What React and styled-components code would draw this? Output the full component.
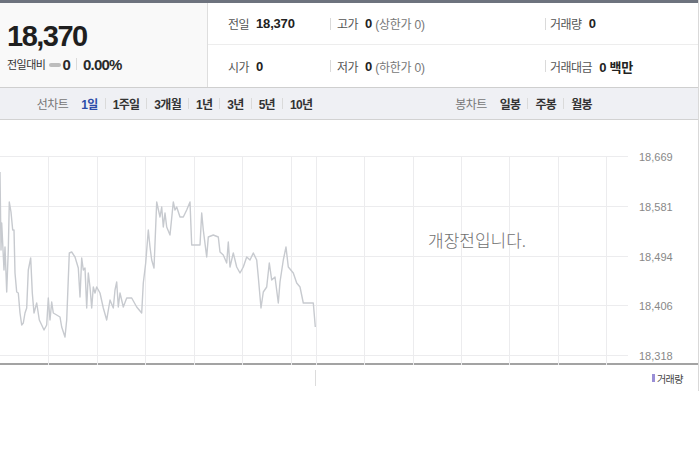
import React from "react";
import styled, { createGlobalStyle } from "styled-components";

const Global = createGlobalStyle`
  html, body { margin: 0; padding: 0; background: #fff; }
  body { font-family: "Liberation Sans", "Noto Sans CJK KR", sans-serif; color: #222; }
  * { box-sizing: border-box; }
`;

const Widget = styled.div`
  width: 699px;
  border-right: 1px solid #d9d9d9;
`;

const TopBar = styled.div`
  height: 3px;
  background: #6d737e;
`;

const Header = styled.div`
  display: grid;
  grid-template-columns: 208px 1fr;
  height: 85px;
  border-bottom: 1px solid #cfcfcf;
`;

const PricePanel = styled.div`
  background: #f9f9f9;
  border-right: 1px solid #dedede;
  padding: 17px 0 0 7px;
`;

const BigPrice = styled.div`
  font-size: 29px;
  font-weight: bold;
  letter-spacing: -1.5px;
  line-height: 32px;
  color: #1f1f1f;
`;

const ChangeRow = styled.div`
  display: flex;
  align-items: center;
  margin-top: 3px;
  height: 18px;
`;

const SmallLabel = styled.span`
  font-size: 11px;
  color: #333;
  letter-spacing: -0.5px;
`;

const FlatMark = styled.span`
  display: inline-block;
  width: 12px;
  height: 4px;
  border-radius: 2px;
  background: #bdbdbd;
  margin: 1px 1px 0 4px;
`;

const ChangeValue = styled.span`
  font-size: 15px;
  font-weight: bold;
  color: #2a2a2a;
  letter-spacing: -0.8px;
`;

const Sep = styled.span`
  display: inline-block;
  flex: none;
  width: 1px;
  height: ${(p) => p.$h ?? 12}px;
  background: #dadada;
  margin: 0 ${(p) => p.$m ?? 6}px;
`;

const InfoGrid = styled.div`
  display: grid;
  grid-template-columns: 122px 215px 1fr;
  grid-template-rows: 42px 1fr;
`;

const InfoCell = styled.div`
  display: flex;
  align-items: center;
  padding-left: ${(p) => (p.$first ? 20 : 0)}px;
  border-bottom: ${(p) => (p.$top ? "1px solid #ededed" : "none")};
`;

const InfoLabel = styled.span`
  font-size: 12px;
  color: #555;
  letter-spacing: -0.5px;
  margin-right: 7px;
  margin-left: ${(p) => p.$ml ?? 0}px;
`;

const InfoValue = styled.span`
  font-size: 13px;
  font-weight: bold;
  color: #222;
  letter-spacing: -0.2px;
`;

const InfoNote = styled.span`
  font-size: 12px;
  color: #777;
  margin-left: 3px;
  letter-spacing: -0.2px;
`;

const Toolbar = styled.div`
  display: flex;
  height: 32px;
  background: #eff0f4;
  border-bottom: 1px solid #d2d2d2;
`;

const ToolGroup = styled.div`
  flex: 1;
  display: flex;
  justify-content: center;
  align-items: center;
`;

const ToolLabel = styled.span`
  font-size: 12px;
  color: #777;
  letter-spacing: -0.5px;
  margin-right: 13px;
`;

const ToolItem = styled.span`
  font-size: 12px;
  font-weight: bold;
  letter-spacing: -0.7px;
  color: ${(p) => (p.$active ? "#2c4ca8" : "#333")};
`;

const ChartBox = styled.div`
  height: 245px;
  border-bottom: 2px solid #a3a3a3;
`;

const VolumeBar = styled.div`
  display: flex;
  align-items: center;
  height: 26px;
`;

const VolSep = styled.div`
  width: 1px;
  height: 16px;
  margin-left: 315px;
  background: #dcdcdc;
`;

const VolLegend = styled.div`
  margin-left: auto;
  margin-right: 15px;
  display: flex;
  align-items: center;
  font-size: 10px;
  color: #444;
  letter-spacing: -0.5px;
`;

const LegendMark = styled.span`
  display: inline-block;
  width: 3px;
  height: 8px;
  background: #9a8fd6;
  margin-right: 2px;
`;

const pts = [
  [0,52],[1,130],[1.7,103],[4,150],[5,127],[6.7,172],[8.3,130],[9.3,82],[11,92],[12.7,110],[14,110],[15,153],[16.7,172],[18.3,173],[20,193],[21.7,205],[23.3,203],[25,193],[26.7,188],[28.3,150],[30.7,138],[32.3,173],[34,193],[36.7,183],[39.3,200],[41.7,205],[44,210],[46.7,205],[48.3,178],[50,200],[51.7,182],[53.3,193],[56.7,195],[60,197],[61.7,207],[65,217],[66.7,200],[69.3,133],[71.7,132],[75,137],[78.3,148],[80,177],[81.7,138],[83.3,150],[85,148],[86.7,188],[88.3,153],[90,167],[91.7,188],[93.3,167],[95,173],[96.7,167],[100,173],[103.3,188],[106.7,200],[110,180],[113.3,188],[115,170],[116.7,162],[118.3,187],[120,173],[123.3,187],[126.7,178],[131.7,178],[136.7,187],[141.7,193],[143.3,163],[145.7,143],[148.3,110],[150,127],[151.7,140],[154,148],[156.7,82],[160,97],[161.7,87],[163.3,107],[165,93],[166.7,107],[170,115],[173.3,82],[175,90],[176.7,87],[180,97],[183.3,97],[186.7,90],[190,82],[191.7,125],[196.7,125],[200,125],[201.7,93],[203.3,110],[206.7,137],[208.3,117],[213.3,115],[218.3,117],[220,132],[223.3,135],[226.7,143],[228.3,122],[230,147],[233.3,133],[236.7,147],[240,153],[243.3,147],[246.7,137],[250,140],[253.3,133],[256.7,140],[258.3,157],[261,188],[263.3,172],[266.7,167],[269.3,143],[271.7,160],[275,157],[278.3,183],[280,162],[283.3,140],[286,127],[288.3,147],[293.3,153],[296.7,163],[300,167],[303.3,183],[313.3,183],[315.3,207]
];

const hLines = [
  { y: 36.5, label: "18,669" },
  { y: 86.5, label: "18,581" },
  { y: 136.5, label: "18,494" },
  { y: 185.5, label: "18,406" },
  { y: 235.5, label: "18,318" },
];
const vLines = [48, 97, 145, 194, 242, 291, 316, 364, 413, 461, 509, 558, 606];

function Chart() {
  return (
    <svg width="698" height="245" viewBox="0 0 698 245" style={{ display: "block" }}>
      {vLines.map((x) => (
        <line key={x} x1={x + 0.5} x2={x + 0.5} y1={36} y2={245} stroke="#ececee" strokeWidth="1" />
      ))}
      {hLines.map((h) => (
        <g key={h.label}>
          <line x1={0} x2={628} y1={h.y} y2={h.y} stroke="#ececee" strokeWidth="1" />
          <text x={639} y={h.y + 4} fontSize="11" fill="#888" fontFamily="Liberation Sans, sans-serif">
            {h.label}
          </text>
        </g>
      ))}
      <polyline
        points={pts.map((p) => p.join(",")).join(" ")}
        fill="none"
        stroke="#c7cacf"
        strokeWidth="1.4"
        strokeLinejoin="round"
      />
      <text x={428} y={127} fontSize="17" fill="#707070" fontFamily="Noto Sans CJK KR, sans-serif" fontWeight="300">
        개장전입니다.
      </text>
    </svg>
  );
}

const periods = ["1일", "1주일", "3개월", "1년", "3년", "5년", "10년"];
const candles = ["일봉", "주봉", "월봉"];

export default function App() {
  return (
    <>
      <Global />
      <Widget>
        <TopBar />
        <Header>
          <PricePanel>
            <BigPrice>18,370</BigPrice>
            <ChangeRow>
              <SmallLabel>전일대비</SmallLabel>
              <FlatMark />
              <ChangeValue>0</ChangeValue>
              <Sep $h={12} $m={6} />
              <ChangeValue>0.00%</ChangeValue>
            </ChangeRow>
          </PricePanel>
          <InfoGrid>
            <InfoCell $first $top>
              <InfoLabel>전일</InfoLabel>
              <InfoValue>18,370</InfoValue>
            </InfoCell>
            <InfoCell $top>
              <Sep $h={12} $m={0} />
              <InfoLabel $ml={6}>고가</InfoLabel>
              <InfoValue>0</InfoValue>
              <InfoNote>(상한가 0)</InfoNote>
            </InfoCell>
            <InfoCell $top>
              <Sep $h={12} $m={0} />
              <InfoLabel $ml={4}>거래량</InfoLabel>
              <InfoValue>0</InfoValue>
            </InfoCell>
            <InfoCell $first>
              <InfoLabel>시가</InfoLabel>
              <InfoValue>0</InfoValue>
            </InfoCell>
            <InfoCell>
              <Sep $h={12} $m={0} />
              <InfoLabel $ml={6}>저가</InfoLabel>
              <InfoValue>0</InfoValue>
              <InfoNote>(하한가 0)</InfoNote>
            </InfoCell>
            <InfoCell>
              <Sep $h={12} $m={0} />
              <InfoLabel $ml={4}>거래대금</InfoLabel>
              <InfoValue>0 백만</InfoValue>
            </InfoCell>
          </InfoGrid>
        </Header>
        <Toolbar>
          <ToolGroup>
            <ToolLabel>선차트</ToolLabel>
            {periods.map((p, i) => (
              <React.Fragment key={p}>
                {i > 0 && <Sep $h={11} $m={7} />}
                <ToolItem $active={i === 0}>{p}</ToolItem>
              </React.Fragment>
            ))}
          </ToolGroup>
          <ToolGroup>
            <ToolLabel>봉차트</ToolLabel>
            {candles.map((p, i) => (
              <React.Fragment key={p}>
                {i > 0 && <Sep $h={11} $m={7} />}
                <ToolItem>{p}</ToolItem>
              </React.Fragment>
            ))}
          </ToolGroup>
        </Toolbar>
        <ChartBox>
          <Chart />
        </ChartBox>
        <VolumeBar>
          <VolSep />
          <VolLegend>
            <LegendMark />
            거래량
          </VolLegend>
        </VolumeBar>
      </Widget>
    </>
  );
}
